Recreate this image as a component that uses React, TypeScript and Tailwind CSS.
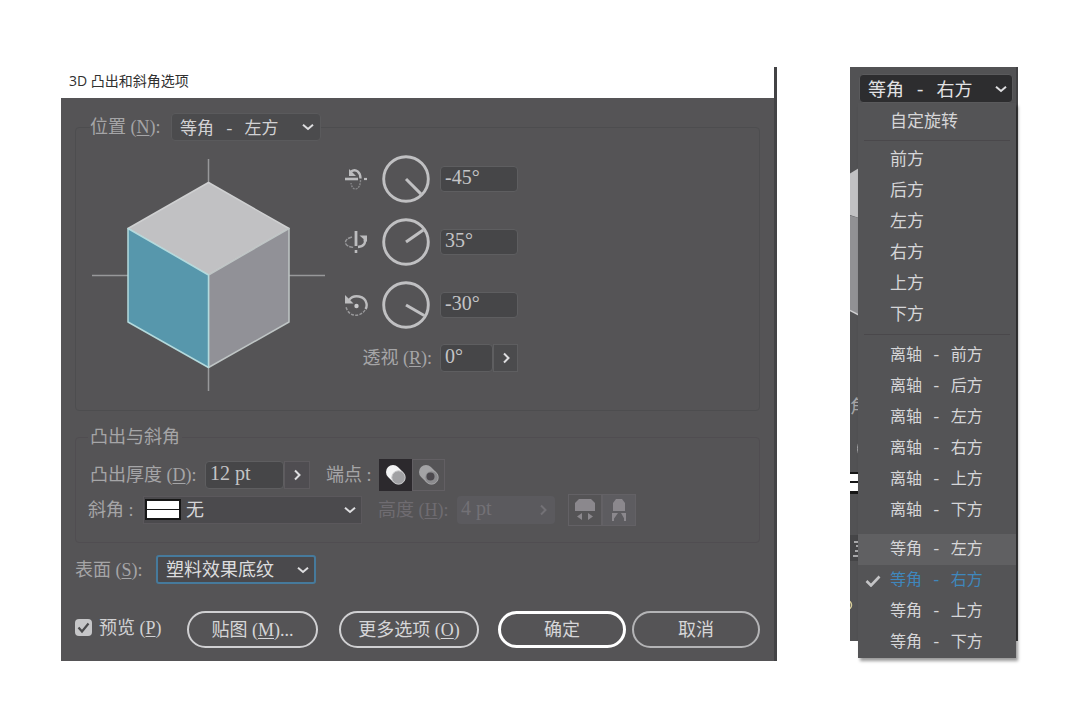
import { useState, type ReactNode } from "react";
import clsx from "clsx";

const HAN = "font-['Liberation_Serif','Noto_Sans_CJK_SC',serif]";
const HAN_MONO = "font-['Liberation_Mono','Noto_Sans_CJK_SC',monospace]";

const MENU_GROUPS = [
  ["自定旋转"],
  ["前方", "后方", "左方", "右方", "上方", "下方"],
  ["离轴 - 前方", "离轴 - 后方", "离轴 - 左方", "离轴 - 右方", "离轴 - 上方", "离轴 - 下方"],
  ["等角 - 左方", "等角 - 右方", "等角 - 上方", "等角 - 下方"],
];

const POSITIONS = MENU_GROUPS.flat();

function Chevron({ className, right }: { className?: string; right?: boolean }) {
  return (
    <svg viewBox="0 0 12 12" className={clsx("h-3 w-3 fill-none stroke-current", className)} strokeWidth="2">
      <path d={right ? "M4 1.5 8.5 6 4 10.5" : "M1 3.8 6 8l5-4.2"} />
    </svg>
  );
}

interface SelectBoxProps {
  id: string;
  label?: string;
  options: string[];
  defaultValue: string;
  width?: string;
  className?: string;
  chevronClass?: string;
  children?: ReactNode;
}

function SelectBox({ id, label, options, defaultValue, width, className, chevronClass, children }: SelectBoxProps) {
  return (
    <div className={clsx("relative", width)}>
      <select
        id={id}
        aria-label={label}
        defaultValue={defaultValue}
        className={clsx("block w-full appearance-none outline-none", className)}
      >
        {options.map((o) => (
          <option key={o}>{o}</option>
        ))}
      </select>
      {children}
      <Chevron className={clsx("pointer-events-none absolute top-1/2 -translate-y-1/2 text-[#dedee0]", chevronClass)} />
    </div>
  );
}

function Label({ htmlFor, text, hotkey, className }: { htmlFor: string; text: string; hotkey?: string; className?: string }) {
  return (
    <label htmlFor={htmlFor} className={clsx("shrink-0 whitespace-nowrap text-[18px] leading-6 text-[#a5a5a7]", className)}>
      {text}
      {hotkey && (
        <>
          {" "}(<u className="underline-offset-2">{hotkey}</u>)
        </>
      )}
      {hotkey ? ":" : " :"}
    </label>
  );
}

function RotateXIcon() {
  return (
    <svg viewBox="0 0 24 24" className="h-6 w-6 fill-none stroke-[#bcbcbe]">
      <path d="M1 12h13" strokeWidth="2.6" />
      <path d="M20 12h3" strokeWidth="2.2" />
      <path d="M7 4.5c5-3.500 9.500 1 9.500 7" strokeWidth="2.4" />
      <path d="M5 2v7h7z" className="fill-[#bcbcbe]" stroke="none" />
      <path d="M16.5 13c0 5-2 9-5 9-2.500 0-4-2.500-4.500-6" strokeWidth="1.400" strokeDasharray="2 1" className="stroke-[#88888a]" />
    </svg>
  );
}

function RotateYIcon() {
  return (
    <svg viewBox="0 0 24 24" className="h-6 w-6 fill-none stroke-[#bcbcbe]">
      <path d="M12 1v15" strokeWidth="2.8" />
      <path d="M12 20v3" strokeWidth="2.6" />
      <path d="M14 17c6-.5 8-4 6.500-8" strokeWidth="2.4" />
      <path d="M15.500 5.500H23V12z" className="fill-[#bcbcbe]" stroke="none" />
      <path d="M8 7c-4 1-7 3-6.500 6S6 17 10 17.500" strokeWidth="1.500" strokeDasharray="4 1" className="stroke-[#98989a]" />
    </svg>
  );
}

function RotateZIcon() {
  return (
    <svg viewBox="0 0 24 24" className="h-6 w-6 fill-none stroke-[#bcbcbe]">
      <path d="M5 7c5-6.500 16-4 17.500 3.500.4 2 0 4-1 5.500" strokeWidth="2.4" />
      <path d="M1 2v8.500h8.500z" className="fill-[#bcbcbe]" stroke="none" />
      <path d="M21 17c-4 7-16 8-19-3" strokeWidth="1.500" strokeDasharray="3 1.300" className="stroke-[#98989a]" />
      <circle cx="12.500" cy="13" r="2.200" className="fill-[#c8c8ca]" stroke="none" />
    </svg>
  );
}

function Dial({ angle }: { angle: number }) {
  const rad = (angle * Math.PI) / 180;
  return (
    <svg viewBox="0 0 48 48" className="h-12 w-12 fill-none stroke-[#c0c0c2]">
      <circle cx="24" cy="24" r="22.300" strokeWidth="2.900" />
      <line x1="24" y1="24" x2={24 + 21 * Math.cos(rad)} y2={24 - 21 * Math.sin(rad)} strokeWidth="3" />
    </svg>
  );
}

const AXES = [
  { name: "X", angle: -45, icon: <RotateXIcon /> },
  { name: "Y", angle: 35, icon: <RotateYIcon /> },
  { name: "Z", angle: -30, icon: <RotateZIcon /> },
];

const FIELD = "rounded-sm border border-[#5e5e60] bg-[#464648] pb-1 text-[20px] leading-5 text-[#c4c4c6] outline-none";

function Cube() {
  return (
    <svg viewBox="90 158 236 234" className="mt-[17px] h-[234px] w-[236px] shrink-0">
      <g stroke="#98989a" strokeWidth="1.500">
        <path d="M208.500 159v24M208.500 367v24M92 275.500h36M289 275.500h36" />
      </g>
      <g strokeWidth="1.500" strokeLinejoin="round">
        <path d="M208.500 182.500 289 228.500l-80.500 46.500L128 228.500z" fill="#c1c1c3" stroke="#cfd0d1" />
        <path d="M208.500 275 289 228.500v93.500l-80.500 45.500z" fill="#919197" stroke="#bfc5c5" />
        <path d="M128 228.500 208.500 275v92.500L128 322z" fill="#5797ac" stroke="#b4dadd" />
      </g>
    </svg>
  );
}

function Discs({ hollow }: { hollow?: boolean }) {
  const rim = hollow ? "#a3a3a5" : "#f4f4f5";
  return (
    <svg viewBox="0 0 24 24" className="h-6 w-6">
      <path d="m9 9 5 5" stroke={rim} strokeWidth="14" strokeLinecap="round" />
      <circle cx="14.500" cy="14.500" r="6.700" fill={hollow ? "#8b8b8e" : "#a1a1a4"} stroke={hollow ? "#a3a3a5" : "#c9c9cb"} />
      {hollow && <circle cx="13.500" cy="13.500" r="4" fill="#4c494e" />}
    </svg>
  );
}

function BevelIcon({ narrow }: { narrow?: boolean }) {
  return (
    <svg viewBox="0 0 24 24" className="h-6 w-6 fill-[#8b888d]">
      {narrow ? (
        <path d="M6 13V5l3-4h6l3 4v8zM6 15l5 0-5 7zM18 15v7l-4-7zM5 15h2v8H5zM17 15h2v8h-2z" />
      ) : (
        <path d="M2 13V5l4-4h12l4 4v8zM4 18.500 9 15v7zM20 18.500 15 15v7z" />
      )}
    </svg>
  );
}

function Swatch({ className }: { className?: string }) {
  return (
    <span className={clsx("pointer-events-none flex h-[21px] w-9 flex-col gap-px border-2 border-[#161616] bg-[#161616]", className)}>
      <span className="flex-1 bg-white" />
      <span className="flex-1 bg-white" />
    </span>
  );
}

const PILL = "h-[37px] shrink-0 rounded-full border-2 border-[#d0d0d2] text-[18px] leading-6 text-[#d6d6d8]";

function OptionsDialog() {
  const [preview, setPreview] = useState(true);
  const [cap, setCap] = useState("solid");

  return (
    <section className="min-w-0 flex-1 border-r-[3px] border-[#434345]">
      <h1 className="flex h-[31px] items-center bg-white pb-[3px] pl-2 font-['Open_Sans','Noto_Sans_CJK_SC',sans-serif] text-[14px] leading-5 text-[#303030]">
        3D 凸出和斜角选项
      </h1>

      <form className="bg-[#555456] px-[14px] pt-[15px] pb-[13px]" onSubmit={(e) => e.preventDefault()}>
        <fieldset className="rounded-sm border border-[#4d4d4f] pb-[18px] pl-[14px]">
          <legend className="flex h-7 items-center">
            <Label htmlFor="position" text="位置" hotkey="N" className="w-[81px]" />
            <SelectBox
              id="position"
              options={POSITIONS}
              defaultValue="等角 - 左方"
              width="w-[150px]"
              className={clsx("h-7 rounded-sm border border-[#5a5a5c] bg-[#4b4b4d] pt-[3px] pl-2 text-[17px] text-[#d2d2d4]", HAN_MONO)}
              chevronClass="right-[7px]"
            />
          </legend>

          <div className="flex gap-[18px]">
            <Cube />
            <div className="mt-[14px] flex flex-col gap-[15px]">
              {AXES.map((axis) => (
                <div key={axis.name} className="flex h-12 items-center">
                  {axis.icon}
                  <div className="ml-[14px]">
                    <Dial angle={axis.angle} />
                  </div>
                  <input
                    aria-label={`${axis.name} 轴旋转`}
                    defaultValue={`${axis.angle}°`}
                    className={clsx("ml-[10px] h-[26px] w-[78px] pl-1", FIELD)}
                  />
                </div>
              ))}
              <div className="flex items-center justify-end">
                <Label htmlFor="perspective" text="透视" hotkey="R" className="mr-2" />
                <input id="perspective" defaultValue="0°" className={clsx("h-7 w-[53px] pl-1", FIELD)} />
                <button type="button" aria-label="透视滑块" className="flex h-7 w-[25px] items-center justify-center border border-[#5e5e60] bg-[#4b4b4d] text-[#dedee0]">
                  <Chevron right />
                </button>
              </div>
            </div>
          </div>
        </fieldset>

        <fieldset className="mt-[14px] rounded-sm border border-[#504d51] pb-4 pl-3">
          <legend className="px-[2px] text-[18px] leading-6 text-[#a5a5a7]">凸出与斜角</legend>

          <div className="mt-[10px] flex h-8 items-center">
            <Label htmlFor="depth" text="凸出厚度" hotkey="D" className="w-[117px] pl-[2px]" />
            <input id="depth" defaultValue="12 pt" className={clsx("h-7 w-[79px] pl-1", FIELD)} />
            <button type="button" aria-label="厚度滑块" className="flex h-7 w-[26px] items-center justify-center border border-[#5e5b5f] bg-[#4f4d51] text-[#dedee0]">
              <Chevron right />
            </button>
            <span className="ml-4 w-[53px] text-[18px] leading-6 whitespace-nowrap text-[#a5a5a7]">端点 :</span>
            <button
              type="button"
              aria-label="开启端点"
              onClick={() => setCap("solid")}
              className={clsx("flex h-8 w-[33px] items-center justify-center", cap === "solid" ? "bg-[#2c292d]" : "border border-[#625f63]")}
            >
              <Discs />
            </button>
            <button
              type="button"
              aria-label="关闭端点"
              onClick={() => setCap("hollow")}
              className={clsx("flex h-8 w-[33px] items-center justify-center", cap === "hollow" ? "bg-[#2c292d]" : "border border-[#625f63]")}
            >
              <Discs hollow />
            </button>
          </div>

          <div className="mt-[3px] flex h-8 items-center">
            <Label htmlFor="bevel" text="斜角" className="w-[55px]" />
            <SelectBox
              id="bevel"
              options={["无", "经典", "拱形"]}
              defaultValue="无"
              width="w-[219px]"
              className="h-7 border border-[#5b585c] bg-[#4b4a4d] pl-[42px] text-[18px] text-[#d6d6d8]"
              chevronClass="right-[6px]"
            >
              <Swatch className="absolute top-[3px] left-[2px]" />
            </SelectBox>
            <Label htmlFor="height" text="高度" hotkey="H" className="ml-4 w-[79px] !text-[#6f6c71]" />
            <input
              id="height"
              disabled
              defaultValue="4 pt"
              className="h-7 w-[73px] rounded-l-sm bg-[#5b5a5e] pb-1 pl-1 text-[20px] leading-5 text-[#737176]"
            />
            <button type="button" disabled aria-label="高度滑块" className="flex h-7 w-[25px] items-center justify-center rounded-r-sm bg-[#5b5a5e] text-[#737176]">
              <Chevron right />
            </button>
            <button type="button" disabled aria-label="斜角外扩" className="ml-[13px] flex h-8 w-[34px] items-center justify-center border border-[#636165]">
              <BevelIcon />
            </button>
            <button type="button" disabled aria-label="斜角内缩" className="flex h-8 w-[34px] items-center justify-center border border-[#636165] bg-[#5d5c60]">
              <BevelIcon narrow />
            </button>
          </div>
        </fieldset>

        <div className="mt-3 flex items-center">
          <Label htmlFor="surface" text="表面" hotkey="S" className="w-[81px]" />
          <SelectBox
            id="surface"
            options={["塑料效果底纹", "扩散底纹", "无底纹", "线框"]}
            defaultValue="塑料效果底纹"
            width="w-[160px]"
            className="h-[29px] rounded-[3px] border-2 border-[#467a9c] bg-[#4a494c] pl-2 text-[18px] text-[#dcdcde]"
            chevronClass="right-[7px]"
          />
        </div>

        <div className="mt-[27px] flex items-center">
          <label className="flex w-28 items-center gap-[7px] pb-1 text-[18px] leading-6 text-[#d0d0d2]">
            <span className="relative flex h-[17px] w-[17px]">
              <input
                type="checkbox"
                checked={preview}
                onChange={(e) => setPreview(e.target.checked)}
                className="h-full w-full appearance-none rounded-sm bg-[#c6c6c8]"
              />
              {preview && (
                <svg viewBox="0 0 17 17" className="pointer-events-none absolute inset-0 fill-none stroke-[#4a4a4c]" strokeWidth="2.200">
                  <path d="m3.500 8.500 3.500 4 6.500-8" />
                </svg>
              )}
            </span>
            <span>
              预览 (<u className="underline-offset-2">P</u>)
            </span>
          </label>
          <button type="button" className={clsx("w-[131px]", PILL)}>
            贴图 (<u className="underline-offset-2">M</u>)...
          </button>
          <button type="button" className={clsx("ml-[21px] w-[140px]", PILL)}>
            更多选项 (<u className="underline-offset-2">O</u>)
          </button>
          <button type="submit" className={clsx("ml-auto w-[128px] !border-[3px] !border-white", PILL)}>
            确定
          </button>
          <button type="button" className={clsx("ml-[6px] w-[128px] !border-[#b4b4b6]", PILL)}>
            取消
          </button>
        </div>
      </form>
    </section>
  );
}

/* Slice of the dialog that stays visible to the left of the open menu */
function DialogSlice() {
  return (
    <div aria-hidden className="absolute inset-x-0 top-0 bottom-[17px] overflow-hidden border-r-2 border-[#414143] bg-[#525254]">
      <svg viewBox="0 0 9 573" className="absolute top-0 left-0 h-[573px] w-[9px]">
        <path d="M0 106.500 9 101v50L0 148z" fill="#c1c1c3" />
        <path d="M0 148.500 9 151v97l-9-5z" fill="#919194" />
        <path d="M0 243.500 9 248" stroke="#d0d0d2" strokeWidth="1.500" />
        <path d="M0 405h9v22H0z" fill="#161616" />
        <path d="M0 407h9v7H0zM0 416h9v8H0z" fill="#fff" />
        <path d="M0 468h9v26H0z" fill="#454547" />
        <path d="M4 475h5M6 479h3M5 484h4M3 489h6" stroke="#c9c9cb" strokeWidth="1.500" />
        <path d="M9 375c-2 5-2 8 0 13" fill="none" stroke="#a5a5a7" />
        <circle cx="-3" cy="538" r="4.500" fill="none" stroke="#d9cf9b" strokeWidth="1.500" />
      </svg>
      <span className="absolute top-[328px] left-0 text-[18px] leading-6 text-[#a5a5a7]">角</span>
    </div>
  );
}

// separator above each group, by group index
const SEPARATORS = ["", "my-[3px] border-[#4a484b]", "mt-1 mb-[5px] border-[#4a484b]", "mt-[3px] mb-1 border-transparent"];

function PositionMenu() {
  const [selected, setSelected] = useState("等角 - 右方");

  return (
    <section className="relative w-[168px] shrink-0">
      <DialogSlice />
      <div className="relative pt-[7px]">
        <div className="pr-[5px] pl-[9px]">
          <SelectBox
            id="position-open"
            label="位置"
            options={POSITIONS}
            defaultValue={selected}
            className={clsx("h-[29px] rounded-sm border border-[#5a5a5c] bg-[#2d2d2f] pt-[3px] pl-2 text-[18px] text-[#e2e2e4]", HAN_MONO)}
            chevronClass="right-[6px]"
          />
        </div>
        <div role="listbox" aria-label="位置" className="mr-[2px] ml-2 bg-[#545456] pt-[3px] shadow-[2px_3px_3px_rgba(0,0,0,0.4)]">
          {MENU_GROUPS.map((group, i) => (
            <div key={group[0]}>
              {i > 0 && <div className={clsx("mx-[6px] border-t", SEPARATORS[i])} />}
              {group.map((item) => (
                <button
                  key={item}
                  type="button"
                  role="option"
                  aria-selected={item === selected}
                  onClick={() => setSelected(item)}
                  className={clsx(
                    "flex h-[31px] w-full items-center pt-px text-left leading-6",
                    item.includes("-") ? HAN_MONO + " text-[16px]" : "text-[17px]",
                    item === selected ? "text-[#3f87bd]" : "text-[#d6d6d8]",
                    item === "等角 - 左方" && "bg-[#606062]"
                  )}
                >
                  <span className="flex w-8 shrink-0 pl-[7px]">
                    {item === selected && (
                      <svg viewBox="0 0 16 12" className="h-3 w-4 fill-none stroke-[#c4c4c6]" strokeWidth="2.600">
                        <path d="m1.500 6 4.500 4.500L14.500 1.500" />
                      </svg>
                    )}
                  </span>
                  {item}
                </button>
              ))}
            </div>
          ))}
        </div>
      </div>
    </section>
  );
}

export default function App() {
  return (
    <main className={clsx("flex min-h-screen items-start gap-[73px] bg-white pt-[67px] pr-[62px] pl-[61px]", HAN)}>
      <OptionsDialog />
      <PositionMenu />
    </main>
  );
}
